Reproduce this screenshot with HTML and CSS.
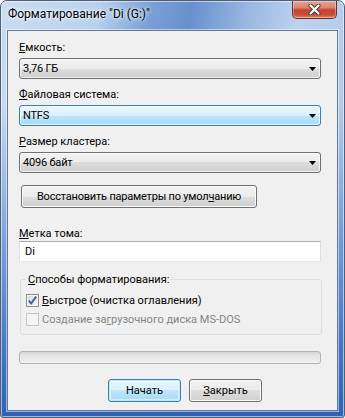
FILE: index.html
```html
<!DOCTYPE html>
<html lang="ru">
<head>
    <meta charset="UTF-8">
    <title>Форматирование "Di (G:)"</title>
    <link rel="stylesheet" href="styles.css">
</head>
<body>
    <div class="window">
        <div class="titlebar">
            <span class="title">Форматирование "Di (G:)"</span>
            <span class="close">
                <svg width="13" height="11" viewBox="0 0 13 11">
                    <path d="M2.5 1.5 L10.5 9.5 M10.5 1.5 L2.5 9.5" stroke="#3a3a3a" stroke-width="4" stroke-linecap="round"/>
                    <path d="M2.5 1.5 L10.5 9.5 M10.5 1.5 L2.5 9.5" stroke="#ffffff" stroke-width="2.2" stroke-linecap="round"/>
                </svg>
            </span>
        </div>

        <div class="client">
            <div class="label first"><u>Е</u>мкость:</div>
            <div class="combo">3,76 ГБ</div>

            <div class="label"><u>Ф</u>айловая система:</div>
            <div class="combo focused">NTFS</div>

            <div class="label"><u>Р</u>азмер кластера:</div>
            <div class="combo">4096 байт</div>

            <button class="btn restore">Восстановить параметры по умол<u>ч</u>анию</button>

            <div class="label volume"><u>М</u>етка тома:</div>
            <div class="textbox">Di</div>

            <fieldset class="group">
                <legend><u>С</u>пособы форматирования:</legend>
                <div class="check">
                    <span class="box checked">
                        <svg width="11" height="11" viewBox="0 0 11 11">
                            <path d="M1.8 5.6 L4.2 8.4 L9.2 1.6" fill="none" stroke="#4a5f95" stroke-width="1.9"/>
                        </svg>
                    </span>
                    <span><u>Б</u>ыстрое (очистка оглавления)</span>
                </div>
                <div class="check disabled">
                    <span class="box"></span>
                    <span>Создание за<u>г</u>рузочного диска MS-DOS</span>
                </div>
            </fieldset>

            <div class="progress"></div>

            <div class="actions">
                <button class="btn default">Начать</button>
                <button class="btn"><u>З</u>акрыть</button>
            </div>
        </div>
    </div>
</body>
</html>
```

FILE: styles.css
```css
html, body {
    margin: 0;
    padding: 0;
}
body {
    font-family: Roboto, "Liberation Sans", sans-serif;
    font-size: 11px;
    color: #000000;
    background: #ffffff;
}
u {
    text-decoration-thickness: 1px;
    text-underline-offset: 1px;
}

.window {
    width: 345px;
    height: 418px;
    box-sizing: border-box;
    border: 1px solid #4b5e7a;
    border-radius: 7px 7px 3px 3px;
    display: flex;
    flex-direction: column;
    background:
        linear-gradient(rgba(255,255,255,0) 0%, rgba(255,255,255,0) 25%, rgba(45,100,190,0.85) 85%, #2c62b8 100%),
        linear-gradient(100deg, #cbdcf1 0%, #b9d0ed 24%, #7aa0d6 36%, #6790cd 46%, #9ab8e1 60%, #bcd2ee 72%, #aac5e8 100%);
    box-shadow: inset 0 0 0 1px rgba(255,255,255,0.55);
    overflow: hidden;
}

.titlebar {
    height: 29px;
    display: flex;
    align-items: flex-start;
    justify-content: space-between;
    padding-left: 7px;
}
.title {
    margin-top: 6px;
    line-height: 15px;
    font-size: 12px;
    text-shadow: 0 0 6px #ffffff, 0 0 3px #ffffff;
}
.close {
    width: 45px;
    height: 18px;
    box-sizing: border-box;
    margin-right: 7px;
    border: 1px solid #6b2f27;
    border-top: none;
    border-radius: 0 0 5px 5px;
    background: linear-gradient(#e8a594 0%, #d98270 40%, #c6452f 52%, #c94a33 80%, #e0876c 100%);
    box-shadow: inset 0 0 0 1px rgba(255,255,255,0.35);
    display: flex;
    align-items: center;
    justify-content: center;
}

.client {
    flex: 1;
    margin: 0 6px 6px 6px;
    border: 1px solid #62799a;
    background: #f0f0f0;
    padding: 0 16px 0 11px;
    box-shadow: 0 0 0 1px rgba(255,255,255,0.5);
}

.label {
    line-height: 15px;
    margin-top: 8px;
}
.label.first {
    margin-top: 9px;
}
.label.volume {
    margin-top: 18px;
    margin-bottom: 0;
}

.combo {
    position: relative;
    height: 21px;
    box-sizing: border-box;
    margin-top: 3px;
    padding-left: 3px;
    line-height: 19px;
    letter-spacing: -0.2px;
    border: 1px solid #707070;
    border-radius: 3px;
    background: linear-gradient(#f3f3f3 0%, #ebebeb 50%, #dddddd 50%, #d0d0d0 100%);
    box-shadow: inset 0 0 0 1px rgba(255,255,255,0.7);
}
.combo::after {
    content: "";
    position: absolute;
    right: 4px;
    top: 8px;
    width: 7px;
    height: 4px;
    background: #000000;
    clip-path: polygon(0 0, 100% 0, 50% 100%);
}
.combo.focused {
    border-color: #3c7fb1;
    background: linear-gradient(#eaf6fd 0%, #d9f0fc 50%, #bee6fd 50%, #a7d9f5 100%);
}

.btn {
    display: block;
    height: 23px;
    box-sizing: border-box;
    padding: 0;
    font: inherit;
    color: #000000;
    border: 1px solid #707070;
    border-radius: 3px;
    background: linear-gradient(#f2f2f2 0%, #ebebeb 50%, #dddddd 50%, #cfcfcf 100%);
    box-shadow: inset 0 0 0 1px #fcfcfc;
}
.btn.default {
    border-color: #3c7fb1;
    background: linear-gradient(#eaf6fd 0%, #d9f0fc 50%, #bee6fd 50%, #a7d9f5 100%);
    box-shadow: inset 0 0 0 1px #bde7fb, inset 0 0 0 2px rgba(255,255,255,0.5);
}
.restore {
    width: 236px;
    margin: 12px 0 0 2px;
    letter-spacing: -0.2px;
}

.textbox {
    height: 21px;
    box-sizing: border-box;
    padding-left: 5px;
    line-height: 19px;
    background: #ffffff;
    border: 1px solid;
    border-color: #abadb3 #dbdfe6 #e3e9ef #e2e3ea;
}

.group {
    margin: 10px -1px 0 1px;
    padding: 7px 0 8px 5px;
    border: 1px solid #d5dfe5;
    border-radius: 3px;
    min-width: 0;
}
.group legend {
    padding: 0 2px;
    line-height: 15px;
}

.check {
    display: flex;
    align-items: center;
    gap: 3px;
    height: 13px;
    line-height: 13px;
}
.check + .check {
    margin-top: 6px;
}
.check.disabled {
    color: #858585;
}
.box {
    width: 13px;
    height: 13px;
    box-sizing: border-box;
    border: 1px solid #8e8f8f;
    background: linear-gradient(135deg, #d4d7dc 0%, #f6f6f6 100%);
    box-shadow: inset 0 0 0 1px #f4f4f4;
    display: flex;
    align-items: center;
    justify-content: center;
}
.check.disabled .box {
    border-color: #c4c4c4;
    background: #f4f4f4;
    box-shadow: none;
}

.progress {
    height: 13px;
    box-sizing: border-box;
    margin-top: 16px;
    border: 1px solid #b2b2b2;
    border-radius: 3px;
    background: linear-gradient(#d6d6d6 0%, #e4e4e4 35%, #e9e9e9 65%, #f3f3f3 100%);
}

.actions {
    display: flex;
    gap: 8px;
    margin: 15px 0 0 89px;
}
.actions .btn {
    width: 73px;
}
```
